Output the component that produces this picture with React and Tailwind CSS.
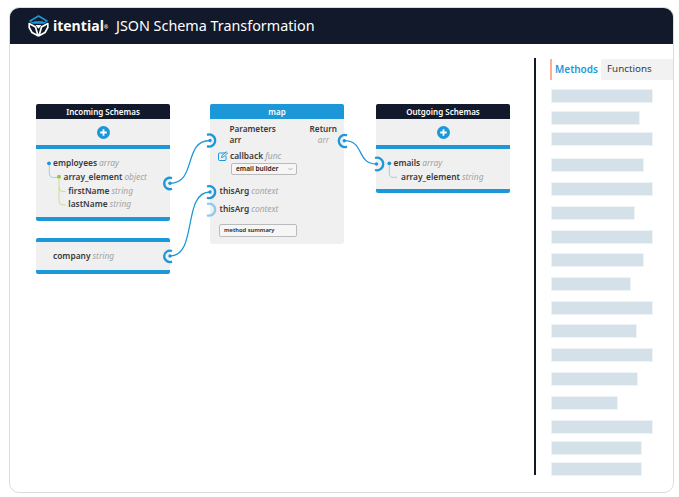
import React from "react";

const FONT = { fontFamily: '"Noto Sans", sans-serif' };
const BLUE = "#1c97d8";

function Logo() {
  return (
    <svg width="21" height="22" viewBox="0 0 21 22" className="shrink-0">
      <path d="M10.500 1 L19 6 L16 8 H5 L2 6 Z" fill="none" stroke={BLUE} strokeWidth="1.500" strokeLinejoin="round" />
      <path d="M6 6.200 H15 L16 8 H5 Z" fill={BLUE} />
      <path d="M1.200 8.500 L7.500 12 L10 20.800 L4 17.500 L1.200 12.500 Z M19.800 8.500 L13.500 12 L11 20.800 L17 17.500 L19.800 12.500 Z" fill="none" stroke="#fff" strokeWidth="1.700" strokeLinejoin="round" />
      <path d="M7.500 10 H13.500 L10.500 13.800 Z" fill="#fff" />
    </svg>
  );
}

function Row({ name, type, className = "" }) {
  return (
    <div className={`flex h-[13.6px] items-center gap-[2px] whitespace-nowrap text-[8.4px] ${className}`}>
      <span className="font-semibold text-[#3a3a3a]">{name}</span>
      <span className="italic text-[#a3a3a3]">{type}</span>
    </div>
  );
}

function Plus() {
  return (
    <div className="flex h-[26px] items-center justify-center bg-[#f0f0f0]">
      <svg width="13" height="13" viewBox="0 0 13 13">
        <circle cx="6.500" cy="6.500" r="6.500" fill={BLUE} />
        <path d="M6.500 3.200 V9.800 M3.200 6.500 H9.800" stroke="#fff" strokeWidth="1.800" />
      </svg>
    </div>
  );
}

function Head({ children, blue }) {
  return (
    <div className={`flex h-[15px] items-center justify-center rounded-t-[2px] text-[8px] font-semibold text-white ${blue ? "bg-[#1c97d8]" : "bg-[#12192b]"}`}>
      {children}
    </div>
  );
}

const BARS = [
  [90, 100], [112, 87], [133, 100], [159, 91], [183, 100], [207, 82], [231, 100], [254, 91], [278, 78],
  [302, 100], [325, 84], [349, 100], [373, 85], [397, 65], [421, 100], [442, 89], [463, 89],
];

function Wires() {
  return (
    <svg className="absolute -left-[10px] -top-[58px]" width="530" height="300" fill="none">
      <g stroke={BLUE} strokeWidth="2.300">
        <path d="M172 178.200 A5.700 5.700 0 1 0 172 188.800" />
        <path d="M172 251 A5.700 5.700 0 1 0 172 261.600" />
        <path d="M207 134.900 A6 6 0 1 1 207 146.100" />
        <path d="M207 186.500 A6 6 0 1 1 207 197.700" />
        <path d="M207 204 A6 6 0 1 1 207 215.200" stroke="#8fc9ea" />
        <path d="M347 135.400 A6 6 0 1 0 347 146.600" />
        <path d="M375 158 A6.300 6.300 0 1 1 375 170" />
      </g>
      <g stroke={BLUE} strokeWidth="1.300">
        <path d="M170 183.300 C 197 183.300, 183 140.500, 210 140.500" />
        <path d="M170 256 C 198 256, 182 192, 210 192" />
        <path d="M344.300 140.700 C 365 140.700, 356 164, 376.500 164" />
      </g>
      <g fill={BLUE}>
        <circle cx="170" cy="183.300" r="1.700" />
        <circle cx="170" cy="256" r="1.700" />
        <circle cx="210" cy="140.500" r="1.700" />
        <circle cx="210" cy="192" r="1.700" />
        <circle cx="344.300" cy="140.700" r="1.700" />
        <circle cx="376.500" cy="164" r="1.700" />
      </g>
      <g strokeWidth="0.700">
        <path d="M49.300 165 V173 Q49.300 177.500 53.500 177.500 H58" stroke="#7cc0e8" />
        <path d="M59 178 V187 Q59 191.500 63 191.500 H65.500 M59 187 V201 Q59 205 63 205 H65.500" stroke="#b6d77a" />
        <path d="M389.300 165 V173 Q389.300 177.300 393 177.300 H397" stroke="#7cc0e8" />
      </g>
      <circle cx="49" cy="163.300" r="1.900" fill={BLUE} />
      <circle cx="59" cy="176.700" r="1.900" fill="#94c83d" />
      <circle cx="389.300" cy="163.300" r="1.900" fill={BLUE} />
    </svg>
  );
}

function Canvas() {
  return (
    <main className="relative w-[526px] shrink-0 border-r-2 border-[#12192b]">
      <section className="absolute left-[26px] top-[46px] w-[134px]">
        <Head>Incoming Schemas</Head>
        <Plus />
        <div className="h-[4px] bg-[#1c97d8]" />
        <div className="h-[68px] bg-[#f0f0f0] pl-[17px] pt-[8px]">
          <Row name="employees" type="array" />
          <Row name="array_element" type="object" className="pl-[10.500px]" />
          <Row name="firstName" type="string" className="pl-[15.300px]" />
          <Row name="lastName" type="string" className="pl-[15.300px]" />
        </div>
        <div className="h-[4px] rounded-b-[2px] bg-[#1c97d8]" />
        <div className="mt-[17px] h-[4px] rounded-t-[2px] bg-[#1c97d8]" />
        <div className="flex h-[28px] items-center bg-[#f0f0f0] pl-[17px] pt-[1px]"><Row name="company" type="string" /></div>
        <div className="h-[4px] rounded-b-[2px] bg-[#1c97d8]" />
      </section>

      <section className="absolute left-[200px] top-[46px] h-[140px] w-[134px] rounded-[3px] bg-[#f0f0f0]">
        <Head blue>map</Head>
        <div className="flex justify-between pl-[19.500px] pr-[7px] pt-[4px] text-[8.2px] font-semibold leading-[11.300px] text-[#3a3a3a]">
          <div>Parameters<br />arr</div>
          <div className="text-right">Return<br /><span className="pr-[8px] font-normal italic text-[#a3a3a3]">arr</span></div>
        </div>
        <div className="mt-[4px] flex items-center gap-[2px] pl-[8px]">
          <svg width="10" height="10" viewBox="0 0 10 10" fill="none" stroke={BLUE} strokeWidth="1">
            <path d="M7.500 2H1.500a1 1 0 0 0-1 1V8.500a1 1 0 0 0 1 1H7a1 1 0 0 0 1-1V5M3.500 6.500L4 4.500L8.200.800L9.500 2L5.500 6Z" />
          </svg>
          <Row name="callback" type="func" />
        </div>
        <div className="ml-[21px] flex h-[12px] w-[66px] items-center justify-between rounded-[2px] border border-[#bbb] bg-[#f6f6f6] pl-[4px] pr-[3px] text-[6.6px] font-semibold text-[#222]">
          email builder
          <svg width="5" height="4" viewBox="0 0 5 4" fill="none" stroke="#888" strokeWidth=".6"><path d="M.5 1L2.500 3L4.500 1" /></svg>
        </div>
        <Row name="thisArg" type="context" className="ml-[9.500px] mt-[9.500px]" />
        <Row name="thisArg" type="context" className="ml-[9.500px] mt-[4.400px]" />
        <div className="ml-[9px] mt-[7.500px] flex h-[13px] w-[78px] items-center rounded-[2px] border border-[#bbb] bg-[#f6f6f6] px-[4px] text-[5.800px] font-semibold text-[#222]">method summary</div>
      </section>

      <section className="absolute left-[366px] top-[46px] w-[134px]">
        <Head>Outgoing Schemas</Head>
        <Plus />
        <div className="h-[4px] bg-[#1c97d8]" />
        <div className="h-[39.500px] bg-[#f0f0f0] pl-[17.500px] pt-[8px]">
          <Row name="emails" type="array" />
          <Row name="array_element" type="string" className="pl-[7.500px]" />
        </div>
        <div className="h-[4px] rounded-b-[2px] bg-[#1c97d8]" />
      </section>

      <Wires />
    </main>
  );
}

function Sidebar() {
  return (
    <aside className="flex flex-1 flex-col pl-[14px] pt-[1px]">
      <div className="flex h-[21px] shrink-0">
        <div className="flex w-[51px] items-center border-l-2 border-[#ffae96] pl-[3px] text-[10px] font-semibold text-[#1c97d8]">Methods</div>
        <div className="flex flex-1 items-center bg-[#f2f2f2] pb-[1px] pl-[6px] text-[9.800px] text-[#3a3a3a]">Functions</div>
      </div>
      {BARS.map(([y, w], i) => (
        <div
          key={y}
          className="ml-[2px] h-[12px] shrink-0 bg-[#d5e1e9] outline outline-[#eef3f6]"
          style={{ width: w, marginTop: y - (i === 0 ? 80 : BARS[i - 1][0] + 12) }}
        />
      ))}
    </aside>
  );
}

export default function App() {
  return (
    <div className="h-[497px] w-[679px] bg-white pl-[9px] pr-[5px] pt-[7px]" style={FONT}>
      <div className="flex h-[486px] flex-col overflow-hidden rounded-[10px] border border-[#dcdcdc] bg-white">
        <header className="flex h-[36px] shrink-0 items-center bg-[#12192b] pl-[18px] text-white">
          <Logo />
          <span className="ml-[4px] w-[63px] text-[14px] font-bold leading-none" style={{ fontFamily: '"Open Sans", sans-serif' }}>itential<sup className="text-[5px]">®</sup></span>
          <span className="text-[14.350px] leading-none">JSON Schema Transformation</span>
        </header>
        <div className="flex min-h-0 flex-1 pt-[14px] pb-[17px]">
          <Canvas />
          <Sidebar />
        </div>
      </div>
    </div>
  );
}
